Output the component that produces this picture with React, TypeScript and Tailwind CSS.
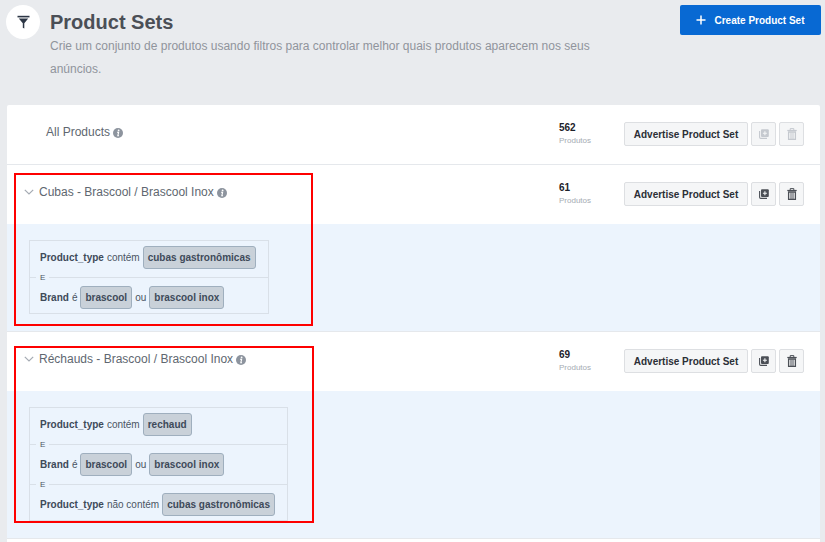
import React, { useState } from 'react';

interface Condition {
    field: string;
    operator: string;
    values: string[];
}

interface ProductSet {
    id: string;
    name: string;
    count: number;
    conditions: Condition[];
    highlight?: string;
}

const productSets: ProductSet[] = [
    { id: 'all', name: 'All Products', count: 562, conditions: [] },
    {
        id: 'cubas',
        name: 'Cubas - Brascool / Brascool Inox',
        count: 61,
        conditions: [
            { field: 'Product_type', operator: 'contém', values: ['cubas gastronômicas'] },
            { field: 'Brand', operator: 'é', values: ['brascool', 'brascool inox'] },
        ],
        highlight: 'top-2 bottom-[5px] w-[299px]',
    },
    {
        id: 'rechauds',
        name: 'Réchauds - Brascool / Brascool Inox',
        count: 69,
        conditions: [
            { field: 'Product_type', operator: 'contém', values: ['rechaud'] },
            { field: 'Brand', operator: 'é', values: ['brascool', 'brascool inox'] },
            { field: 'Product_type', operator: 'não contém', values: ['cubas gastronômicas'] },
        ],
        highlight: 'top-[14px] bottom-[15px] w-[300px]',
    },
];

function FilterIcon() {
    return (
        <svg width="13" height="14" viewBox="0 0 13 14" fill="#2c3645" aria-hidden="true">
            <rect x="0.5" y="0.8" width="12" height="1.6" />
            <path d="M1.8 3.4h9.4L7.3 8.2V13.6L5.8 12.8V8.2z" />
        </svg>
    );
}

function InfoIcon() {
    return (
        <svg width="10" height="10" viewBox="0 0 10 10" className="mt-[2px] shrink-0" aria-hidden="true">
            <circle cx="5" cy="5" r="5" fill="#8d949e" />
            <circle cx="5.6" cy="2.4" r="0.9" fill="#fff" />
            <path d="M4 4.3h1.6L4.8 7.8h1.2" fill="none" stroke="#fff" strokeWidth="1.1" />
        </svg>
    );
}

function DuplicateIcon() {
    return (
        <svg width="10" height="10" viewBox="0 0 10 10" aria-hidden="true">
            <path d="M.6 2v6.3c0 .6.5 1.1 1.1 1.1H8" fill="none" stroke="currentColor" strokeWidth="1.1" />
            <rect x="2" y="0.3" width="7.8" height="7.8" rx="1" fill="currentColor" />
            <path d="M5.9 2.2v4M3.9 4.2h4" stroke="#f5f6f7" strokeWidth="1.1" />
        </svg>
    );
}

function TrashIcon() {
    return (
        <svg width="10" height="12" viewBox="0 0 10 12" fill="none" stroke="currentColor" aria-hidden="true">
            <path d="M3.2 2V.6h3.6V2" />
            <path d="M.3 2.5h9.4" strokeWidth="1.2" />
            <path d="M1.6 4v7.4h6.8V4z" strokeWidth="1.3" />
            <path d="M4 4.5v6.5M6 4.5v6.5" strokeWidth="1" />
        </svg>
    );
}

function ConditionBox({ conditions }: { conditions: Condition[] }) {
    return (
        <div className="w-fit border border-[#d9e0e8] pt-[5px] pb-1 text-[10px] text-[#4b5563]">
            {conditions.map((condition, index) => (
                <React.Fragment key={index}>
                    {index > 0 && (
                        <div className="flex h-[17px] items-center gap-1 text-[8px]">
                            <span className="h-px w-[6px] bg-[#d9e0e8]" />
                            <span>E</span>
                            <span className="h-px flex-1 bg-[#d9e0e8]" />
                        </div>
                    )}
                    <div className="flex h-[23px] items-center gap-[3px] pr-3 pl-[10px]">
                        <b className="text-[#3e4a59]">{condition.field}</b>
                        <span>{condition.operator}</span>
                        {condition.values.map((value, i) => (
                            <React.Fragment key={value}>
                                {i > 0 && <span>ou</span>}
                                <b className="flex h-[23px] items-center rounded-[3px] border border-[#9fafbe] bg-[#c9d1d9] px-1 text-[#3e4a59]">
                                    {value}
                                </b>
                            </React.Fragment>
                        ))}
                    </div>
                </React.Fragment>
            ))}
        </div>
    );
}

function ProductSetRow({ set }: { set: ProductSet }) {
    const [open, setOpen] = useState(true);
    const isDefault = set.conditions.length === 0;
    const buttonStyle = 'flex h-6 items-center justify-center rounded-[2px] border border-[#dddfe2] bg-[#f5f6f7]';

    return (
        <section className="relative border-t border-[#e5e8ec] first:border-t-0">
            <div className="flex h-[59px] items-start pt-[17px] pr-4 pl-[17px]">
                <div className="flex flex-1 items-center gap-[3px] text-[12px] leading-5 text-[#606770]">
                    {isDefault ? (
                        <span className="pl-[22px]">{set.name}</span>
                    ) : (
                        <button type="button" aria-expanded={open} onClick={() => setOpen(!open)} className="flex items-center gap-[5px]">
                            <svg width="10" height="6" viewBox="0 0 10 6" fill="none" stroke="#a5abb3" strokeWidth="1.2" aria-hidden="true">
                                <path d="M.8.8L5 5 9.2.8" />
                            </svg>
                            {set.name}
                        </button>
                    )}
                    <InfoIcon />
                </div>
                <div className="w-[65px]">
                    <div className="text-[10px] leading-3 font-bold text-[#1d2129]">{set.count}</div>
                    <div className="text-[8px] leading-[14px] text-[#a5abb3]">Produtos</div>
                </div>
                <div className="flex gap-[3px]">
                    <button type="button" className={`${buttonStyle} w-[124px] text-[10px] font-bold text-[#2b2f36]`}>
                        Advertise Product Set
                    </button>
                    <button type="button" aria-label="Duplicate" disabled={isDefault} className={`${buttonStyle} w-[25px] text-[#4b4f56] disabled:text-[#c5c9cf]`}>
                        <DuplicateIcon />
                    </button>
                    <button type="button" aria-label="Delete" disabled={isDefault} className={`${buttonStyle} w-[25px] text-[#4b4f56] disabled:text-[#c5c9cf]`}>
                        <TrashIcon />
                    </button>
                </div>
            </div>
            {!isDefault && open && (
                <div className="bg-[#ecf4fd] px-[22px] pt-4 pb-[17px]">
                    <ConditionBox conditions={set.conditions} />
                </div>
            )}
            {set.highlight && (
                <div className={`pointer-events-none absolute left-[7px] border-2 border-[#fe0000] ${set.highlight}`} />
            )}
        </section>
    );
}

export default function App() {
    return (
        <div className="flex min-h-screen flex-col bg-[#e9ebee] pr-1 pl-[6px] font-['Liberation_Sans',Arial,sans-serif]">
            <header className="flex h-[105px] items-start pt-[5px]">
                <div className="flex h-[34px] w-[34px] items-center justify-center rounded-full bg-white">
                    <FilterIcon />
                </div>
                <div className="flex-1 pt-1 pl-[10px]">
                    <h1 className="text-[20px] leading-[26px] font-bold text-[#4b4f56]">Product Sets</h1>
                    <p className="max-w-[560px] text-[12px] leading-[23px] text-[#90949c]">
                        Crie um conjunto de produtos usando filtros para controlar melhor quais produtos aparecem nos seus anúncios.
                    </p>
                </div>
                <button type="button" className="flex h-[30px] w-[141px] items-center justify-center gap-2 rounded-[2px] bg-[#0869d3] text-[10px] font-bold text-white">
                    <svg width="10" height="10" viewBox="0 0 10 10" stroke="currentColor" strokeWidth="1.5" aria-hidden="true">
                        <path d="M5 .5v9M.5 5h9" />
                    </svg>
                    Create Product Set
                </button>
            </header>
            <main className="mr-px ml-px flex-1 rounded-t-[2px] bg-white">
                {productSets.map((set) => (
                    <ProductSetRow key={set.id} set={set} />
                ))}
                <div className="border-t border-[#e5e8ec]" />
            </main>
        </div>
    );
}
